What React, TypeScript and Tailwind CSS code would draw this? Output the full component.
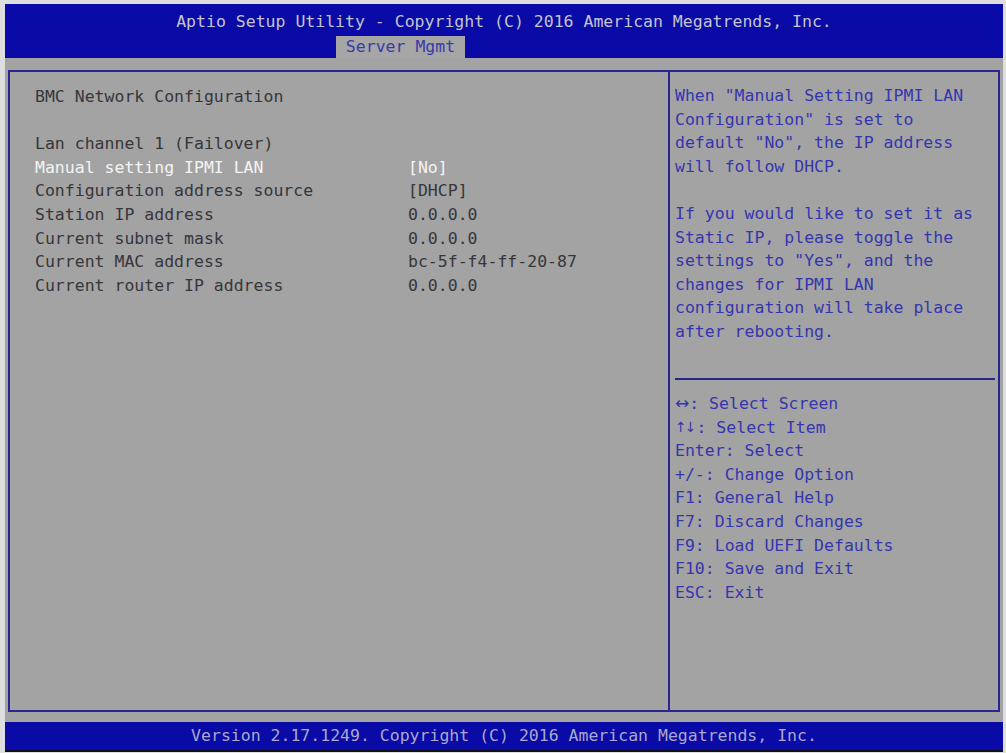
import React from 'react';

const MONO = { fontFamily: '"DejaVu Sans Mono", "Liberation Mono", monospace' };
const SANS = { fontFamily: '"DejaVu Sans", sans-serif' };

const items: { label: string; value: string; active?: boolean }[] = [
  { label: 'Manual setting IPMI LAN', value: '[No]', active: true },
  { label: 'Configuration address source', value: '[DHCP]' },
  { label: 'Station IP address', value: '0.0.0.0' },
  { label: 'Current subnet mask', value: '0.0.0.0' },
  { label: 'Current MAC address', value: 'bc-5f-f4-ff-20-87' },
  { label: 'Current router IP address', value: '0.0.0.0' },
];

const helpLines = [
  'When "Manual Setting IPMI LAN',
  'Configuration" is set to',
  'default "No", the IP address',
  'will follow DHCP.',
  '',
  'If you would like to set it as',
  'Static IP, please toggle the',
  'settings to "Yes", and the',
  'changes for IPMI LAN',
  'configuration will take place',
  'after rebooting.',
];

const keys = [
  'Enter: Select',
  '+/-: Change Option',
  'F1: General Help',
  'F7: Discard Changes',
  'F9: Load UEFI Defaults',
  'F10: Save and Exit',
  'ESC: Exit',
];

export default function App() {
  return (
    <div className="w-[1006px] h-[753px] bg-[#dedede] pt-[4px] pl-[5px] pr-[3px]" style={MONO}>
      <div className="flex flex-col h-[748px] border-b-2 border-[#101018] text-[16.5px] leading-[23.6px]">
        {/* Header */}
        <div className="bg-[#0a0aa6] h-[54px] flex flex-col shrink-0">
          <div className="h-[32px] pt-[4px] flex items-center justify-center text-[#c4c4cc] whitespace-pre">
            Aptio Setup Utility - Copyright (C) 2016 American Megatrends, Inc.
          </div>
          <div className="h-[22px] flex">
            <div className="ml-[331px] w-[129px] bg-[#a6a6a6] text-[#3a3aa8] flex items-center justify-center whitespace-pre">
              Server Mgmt
            </div>
          </div>
        </div>

        {/* Body */}
        <div className="flex-1 bg-[#a3a3a3] pt-[12px] pb-[10px] px-[3px] flex">
          <div className="flex-1 flex border-2 border-[#26268c]">
            <div className="w-[660px] shrink-0 border-r-2 border-[#26268c] pt-[13px] pl-[25px] text-[#36363a] whitespace-pre">
              <div>BMC Network Configuration</div>
              <div>&nbsp;</div>
              <div>Lan channel 1 (Failover)</div>
              {items.map((it) => (
                <div key={it.label} className={`grid grid-cols-[373px_1fr] ${it.active ? 'text-[#f4f4f4]' : ''}`}>
                  <span>{it.label}</span>
                  <span>{it.value}</span>
                </div>
              ))}
            </div>
            <div className="flex-1 flex flex-col text-[#3535ae] whitespace-pre">
              <div className="h-[306px] pt-[12px] pl-[5px]">
                {helpLines.map((l, i) => (
                  <div key={i}>{l || '\u00a0'}</div>
                ))}
              </div>
              <div className="ml-[5px] mr-[3px] border-t-2 border-[#26268c] pt-[12px]">
                <div className="flex items-center h-[23.6px]">
                  <span className="text-[17px] leading-[23.6px]" style={SANS}>↔</span>
                  <span>: Select Screen</span>
                </div>
                <div className="flex items-center h-[23.6px]">
                  <span className="text-[14px] leading-[23.6px] tracking-[-2px]" style={SANS}>↑↓</span>
                  <span className="pl-[2px]">: Select Item</span>
                </div>
                {keys.map((k) => (
                  <div key={k}>{k}</div>
                ))}
              </div>
            </div>
          </div>
        </div>

        {/* Footer */}
        <div className="h-[28px] bg-[#0a0aa6] shrink-0 flex items-center justify-center text-[#a8a8cc] whitespace-pre">
          Version 2.17.1249. Copyright (C) 2016 American Megatrends, Inc.
        </div>
      </div>
    </div>
  );
}
